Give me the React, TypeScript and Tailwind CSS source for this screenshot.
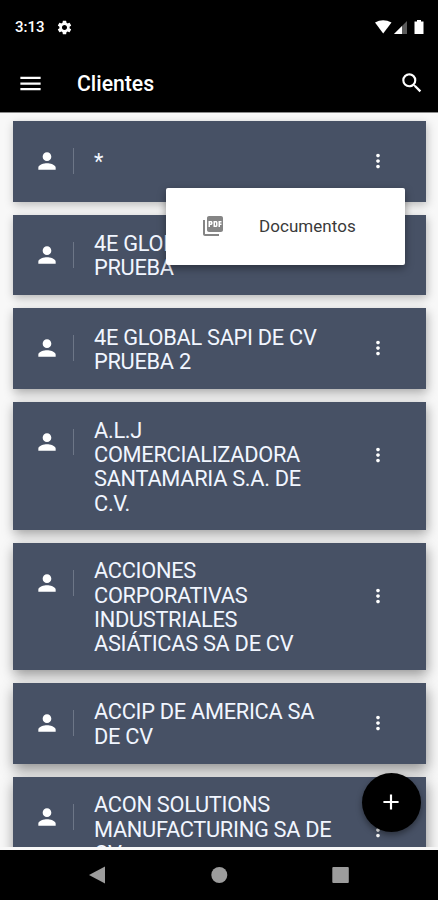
import { useState } from "react"
import { MdMenu, MdSearch, MdPerson, MdMoreVert, MdAdd, MdSettings, MdPictureAsPdf } from "react-icons/md";

interface Client {
  id: number;
  name: string;
  tall?: boolean;
}

const clients: Client[] = [
  { id: 1, name: "*" },
  { id: 2, name: "4E GLOBAL SAPI DE CV PRUEBA" },
  { id: 3, name: "4E GLOBAL SAPI DE CV PRUEBA 2" },
  { id: 4, name: "A.L.J COMERCIALIZADORA SANTAMARIA S.A. DE C.V.", tall: true },
  { id: 5, name: "ACCIONES CORPORATIVAS INDUSTRIALES ASIÁTICAS SA DE CV", tall: true },
  { id: 6, name: "ACCIP DE AMERICA SA DE CV" },
  { id: 7, name: "ACON SOLUTIONS MANUFACTURING SA DE CV", tall: true },
];

// the shadow gets heavier further down the list
const shadows = [
  "shadow-[1px_3px_9px_rgba(0,0,0,0.25)]",
  "shadow-[1px_3px_9px_rgba(0,0,0,0.28)]",
  "shadow-[1px_4px_10px_rgba(0,0,0,0.32)]",
  "shadow-[1px_4px_11px_rgba(0,0,0,0.36)]",
  "shadow-[1px_5px_12px_rgba(0,0,0,0.4)]",
  "shadow-[1px_6px_13px_rgba(0,0,0,0.42)]",
  "shadow-[1px_6px_13px_rgba(0,0,0,0.42)]",
];

export default function App() {
  const [openId, setOpenId] = useState<number | null>(1);

  return (
    <div className="h-[900px] w-[438px] flex flex-col overflow-hidden bg-black font-[Roboto,sans-serif]">
      <StatusBar />
      <TopBar />
      <main className="relative h-[738px] shrink-0 bg-[#f8f8f8]">
        <div className="h-[735px] overflow-hidden border-t border-[#8a8a8a] pt-[8.5px] pl-[13px] pr-[12.5px]">
          <div className="flex flex-col gap-[13.1px]">
            {clients.map((client, i) => (
              <ClientCard
                key={client.id}
                client={client}
                shadow={shadows[i]}
                open={openId === client.id}
                onToggle={() => setOpenId((c) => (c === client.id ? null : client.id))}
              />
            ))}
          </div>
        </div>
        <button
          aria-label="Agregar"
          className="absolute right-[17.5px] bottom-[18px] z-10 flex size-[59px] items-center justify-center rounded-full bg-black text-white shadow-[0_3px_6px_rgba(0,0,0,0.4)]"
        >
          <MdAdd size={26} />
        </button>
      </main>
      <NavBar />
    </div>
  );
}

function StatusBar() {
  return (
    <div className="flex h-[54px] shrink-0 items-center pl-[15px] pr-[13px] text-white">
      <span className="pt-px text-[15px] font-medium">3:13</span>
      <MdSettings size={17} className="ml-[11px]" />
      <svg className="ml-auto" width="50" height="16" viewBox="0 0 50 16" fill="#fff">
        <path d="M0 3.5 Q8 -1 16.5 3.5 L8.2 14.5 Z" />
        <path d="M32 2 V15 H19 Z" fill="#5a5a5a" />
        <path d="M27 7 V15 H19 Z" />
        <path d="M42 1 H46 V2.5 H48.5 V15 H39.5 V2.5 H42 Z" />
      </svg>
    </div>
  );
}

function TopBar() {
  return (
    <header className="flex h-[57.5px] shrink-0 items-center pl-[17px] pr-[13px] text-white">
      <MdMenu size={27} className="mt-px" />
      <h1 className="ml-[33px] pt-[2px] text-[21.2px] font-medium">Clientes</h1>
      <MdSearch size={26} className="ml-auto" />
    </header>
  );
}

interface ClientCardProps {
  client: Client;
  shadow: string;
  open: boolean;
  onToggle: () => void;
}

function ClientCard({ client, shadow, open, onToggle }: ClientCardProps) {
  return (
    <div
      className={`relative flex items-start bg-[#475165] pl-[21px] text-[#f1f6ff] ${shadow} ${
        client.tall ? "h-[127.5px]" : "h-[80.6px]"
      }`}
    >
      <div className="flex h-[80px] items-center">
        <MdPerson size={26} className="text-white" />
        <div className="ml-[13px] h-[26px] w-px bg-[#6d7687]" />
      </div>
      <div className={`ml-5 flex w-[243px] items-center ${client.tall ? "pt-[16.5px]" : "h-[80.6px] pt-[2.5px]"}`}>
        <p className="text-[21.8px] leading-[24.4px] tracking-[-0.29px]">{client.name}</p>
      </div>
      <button
        aria-label="Opciones"
        onClick={onToggle}
        className={`ml-[30px] flex items-center text-white ${client.tall ? "h-[106px]" : "h-[80px]"}`}
      >
        <MdMoreVert size={22} />
      </button>

      {open && (
        <div className="absolute top-[66.5px] left-[153px] z-10 flex h-[77px] w-[238.5px] items-center rounded-[2px] bg-white pl-[34.5px] shadow-[0_3px_8px_rgba(0,0,0,0.4)]">
          <MdPictureAsPdf size={24} className="text-[#858585]" />
          <span className="ml-[34.5px] pt-[2px] text-[17px] tracking-[0.05px] text-[#3a3a3a]">Documentos</span>
        </div>
      )}
    </div>
  );
}

function NavBar() {
  return (
    <nav className="flex h-[50.5px] shrink-0 items-center pl-[88.5px] text-[#9c9c9c]">
      <svg width="260" height="18" viewBox="0 0 260 18" fill="currentColor">
        <path d="M0 9 L16 0.5 V17.5 Z" />
        <circle cx="130.3" cy="9" r="8" />
        <rect x="243.3" y="1" width="16.5" height="16" rx="1" />
      </svg>
    </nav>
  );
}
